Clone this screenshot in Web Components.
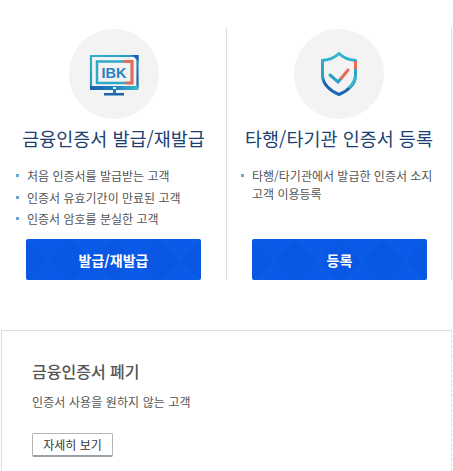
<!DOCTYPE html>
<html lang="ko"><head><meta charset="utf-8">
<style>
html,body{margin:0;padding:0;background:#fff;overflow:hidden}
body{width:453px;height:471px;font-family:"Noto Sans CJK KR","Noto Sans",sans-serif;}
.top{display:flex;padding-top:28px;height:252px;box-sizing:content-box}
</style></head><body>
<div class="top">
<cert-col title-text="금융인증서 발급/재발급" btn="발급/재발급" btn-left="25" list-left="15" style="width:227px;padding-left:1px">
  <svg slot="icon" width="50" height="50" viewBox="0 0 50 50"><defs>
    <linearGradient id="a" x1="0" y1="0" x2="1" y2="1"><stop offset="0" stop-color="#2fb3c8"/><stop offset=".55" stop-color="#2b8fc4"/><stop offset="1" stop-color="#1c5fae"/></linearGradient>
    <linearGradient id="b" x1="0" y1="0" x2="1" y2="0"><stop offset="0" stop-color="#1b62ae"/><stop offset=".5" stop-color="#1f7fc0"/><stop offset="1" stop-color="#36bccb"/></linearGradient></defs>
    <path d="M2 7H48.500V38H2Z" fill="none" stroke="url(#a)" stroke-width="2.200"/>
    <path d="M1 37H49.500V41H1Z" fill="url(#b)"/>
    <rect x="24" y="38" width="3" height="2" fill="#e8f3f8"/>
    <path d="M8 12.500H43V34H8Z" fill="none" stroke="#2fa9c6" stroke-width="2.500"/>
    <path d="M35 12.500H43V34H37" fill="none" stroke="#ea6b55" stroke-width="3"/>
    <path d="M43 6L49.500 6V12.500Z" fill="#1c5fae"/>
    <text x="25" y="29" text-anchor="middle" font-family="Liberation Sans,sans-serif" font-weight="700" font-size="14.500" fill="#2a80c4">IBK</text>
    <rect x="24" y="41" width="3" height="3" fill="#1f7fc0"/>
    <rect x="15" y="44" width="20" height="2.500" fill="#1c66b0"/>
  </svg>
  <li>처음 인증서를 발급받는 고객</li>
  <li>인증서 유효기간이 만료된 고객</li>
  <li>인증서 암호를 분실한 고객</li>
</cert-col>
<cert-col title-text="타행/타기관 인증서 등록" btn="등록" btn-left="25" list-left="14" style="width:225px">
  <svg slot="icon" width="38" height="46" viewBox="0 0 38 46"><defs>
    <linearGradient id="c" x1="0" y1="0" x2="0" y2="1"><stop offset="0" stop-color="#35b6cc"/><stop offset=".55" stop-color="#2aa0c6"/><stop offset=".75" stop-color="#1b5fae"/><stop offset="1" stop-color="#1c6ab4"/></linearGradient></defs>
    <path d="M19 2.500C15 6.500 8 9 2.500 9.500V24C2.500 33 10 40 19 43.500C28 40 35.500 33 35.500 24V9.500C30 9 23 6.500 19 2.500Z" fill="none" stroke="url(#c)" stroke-width="3"/>
    <path d="M35.500 10V18" stroke="#ea6b55" stroke-width="3" fill="none"/>
    <path d="M29 37C32 34 35.500 30 35.500 24" stroke="#35b6cc" stroke-width="3" fill="none"/>
    <path d="M10 24L18 31L21.500 27" fill="none" stroke="#2b9fc6" stroke-width="3" stroke-linecap="round"/>
    <path d="M21.500 27L28 19" fill="none" stroke="#ea6b55" stroke-width="3" stroke-linecap="round"/>
  </svg>
  <li>타행/타기관에서 발급한 인증서 소지<br>고객 이용등록</li>
</cert-col>
</div>
<revoke-card></revoke-card>
<script>
class CertCol extends HTMLElement{
  connectedCallback(){
    if(this.shadowRoot)return;
    const r=this.attachShadow({mode:"open"});
    const t=this.getAttribute("title-text"),b=this.getAttribute("btn"),bl=this.getAttribute("btn-left"),ll=this.getAttribute("list-left");
    r.innerHTML=`<style>
    :host{display:flex;flex-direction:column;box-sizing:border-box;border-right:1px solid #dcdcdc;height:252px;align-items:stretch}
    .circle{width:90px;height:90px;border-radius:50%;background:#f3f3f3;margin:1px auto 0;display:flex;align-items:center;justify-content:center;flex:none}
    h2{margin:6px 0 0;font-weight:400;font-size:18.5px;line-height:26px;color:#1d3f72;text-align:center;white-space:nowrap}
    ul{list-style:none;margin:16px 0 0;padding:0 0 0 ${ll}px;flex:1;font-size:12px;line-height:18px;color:#555}
    ::slotted(li){position:relative;padding-left:11px;white-space:nowrap;margin-bottom:3.5px}
    ::slotted(li)::before{content:"";position:absolute;left:0;top:7px;width:3px;height:3px;background:#6aa5d4}
    .btn{margin:0 0 0 ${bl}px;width:175px;height:41px;flex:none;border-radius:2px;display:flex;align-items:center;justify-content:center;color:#fff;font-weight:700;font-size:14px;
      background:repeating-conic-gradient(from 45deg at 50% 50%,rgba(0,40,170,.08) 0 25%,transparent 0 50%) 0 0/44px 44px,#0a5be8;}
    </style>
    <div class="circle"><slot name="icon"></slot></div>
    <h2>${t}</h2>
    <ul><slot></slot></ul>
    <div class="btn">${b}</div>`;
  }
}
customElements.define("cert-col",CertCol);
class RevokeCard extends HTMLElement{
  constructor(){super();const r=this.attachShadow({mode:"open"});
    r.innerHTML=`<style>
    :host{display:block;box-sizing:border-box;margin:50px 0 0 1px;width:451px;height:141px;border-top:1px solid #dedede;border-left:1px solid #dedede;border-right:1px dashed #dedede;padding:28px 0 0 30px}
    h3{margin:0;font-size:16px;line-height:24px;font-weight:500;color:#555}
    p{margin:9px 0 0;font-size:12px;line-height:20px;color:#555;letter-spacing:.1px}
    .b{box-sizing:border-box;margin-top:21px;width:81px;height:24px;border:1px solid #b4b4b4;border-bottom:2px solid #98a0a8;border-radius:2px;font-size:12px;color:#333;display:flex;align-items:center;justify-content:center;background:#fff}
    </style><h3>금융인증서 폐기</h3><p>인증서 사용을 원하지 않는 고객</p><div class="b">자세히 보기</div>`;
  }
}
customElements.define("revoke-card",RevokeCard);
</script>
</body></html>
